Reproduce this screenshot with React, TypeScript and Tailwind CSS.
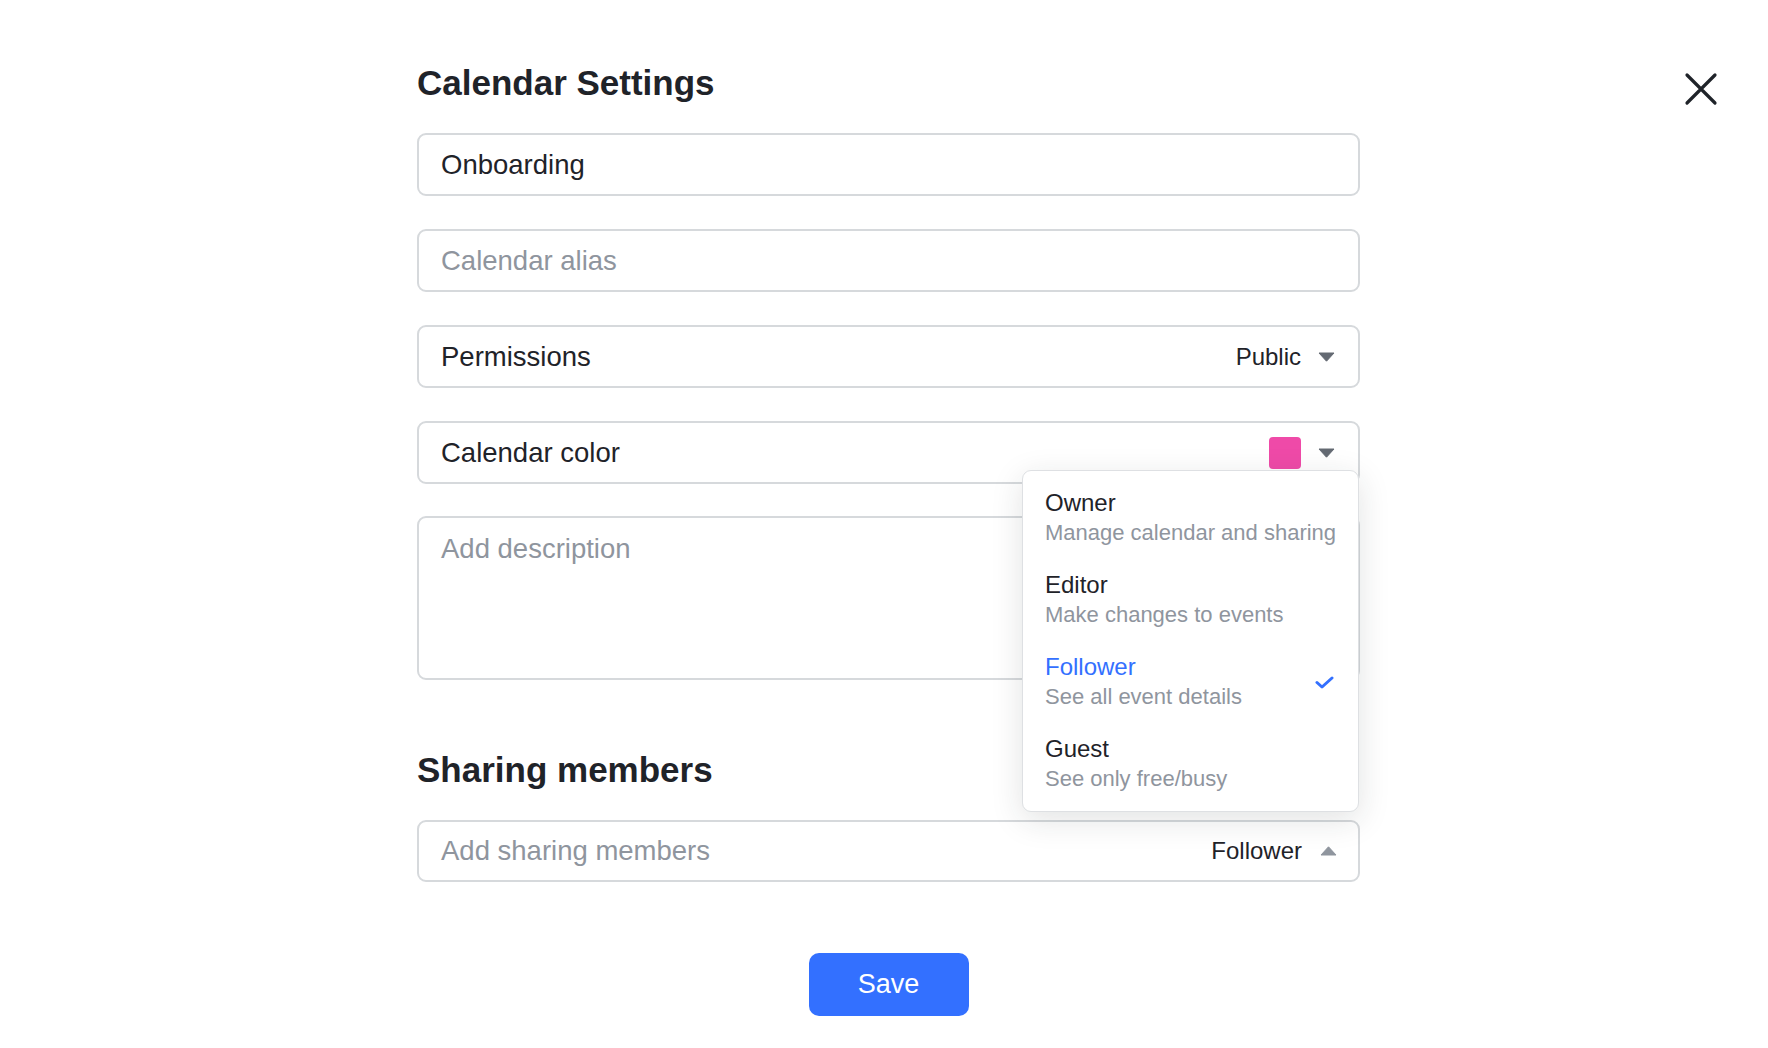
import React from "react";

function TriDown({ color = "#646a73" }: { color?: string }) {
  return (
    <svg width="17" height="10" viewBox="0 0 17 10" className="shrink-0">
      <path d="M1 1 H16 L8.5 9.2 Z" fill={color} stroke={color} strokeWidth="1" strokeLinejoin="round" />
    </svg>
  );
}

function TriUp({ color = "#8f959e" }: { color?: string }) {
  return (
    <svg width="17" height="10" viewBox="0 0 17 10" className="shrink-0">
      <path d="M1 9 H16 L8.5 0.8 Z" fill={color} stroke={color} strokeWidth="1" strokeLinejoin="round" />
    </svg>
  );
}

const items = [
  { t: "Owner", s: "Manage calendar and sharing", active: false },
  { t: "Editor", s: "Make changes to events", active: false },
  { t: "Follower", s: "See all event details", active: true },
  { t: "Guest", s: "See only free/busy", active: false },
];

export default function App() {
  return (
    <div className="relative min-h-[1048px] w-full bg-white text-[#1f2329] [font-family:'Liberation_Sans',Arial,sans-serif]">
      <button className="absolute left-[1683px] top-[71px] flex h-[36px] w-[36px] items-center justify-center">
        <svg width="36" height="36" viewBox="0 0 36 36">
          <path d="M4 4 L32 32 M32 4 L4 32" stroke="#1f2329" strokeWidth="3.2" strokeLinecap="round" />
        </svg>
      </button>

      <div className="ml-[417px] flex w-[943px] flex-col pt-[63px]">
        <h1 className="text-[35px] font-bold leading-[40px]">Calendar Settings</h1>

        <div className="mt-[30px] flex h-[63px] items-center rounded-[9px] border-2 border-[#d6d9dc] px-[22px] text-[27.5px]">
          Onboarding
        </div>

        <div className="mt-[33px] flex h-[63px] items-center rounded-[9px] border-2 border-[#d6d9dc] px-[22px] text-[27.5px] text-[#8f959e]">
          Calendar alias
        </div>

        <div className="mt-[33px] flex h-[63px] items-center justify-between rounded-[9px] border-2 border-[#d6d9dc] pl-[22px] pr-[23px] pt-[1px] text-[27.5px]">
          <span>Permissions</span>
          <div className="flex items-center gap-[17px]">
            <span className="text-[24px]">Public</span>
            <TriDown />
          </div>
        </div>

        <div className="relative mt-[33px] flex h-[63px] items-center justify-between rounded-[9px] border-2 border-[#d6d9dc] pl-[22px] pr-[23px] text-[27.5px]">
          <span>Calendar color</span>
          <div className="flex items-center gap-[17px]">
            <div className="h-[32px] w-[32px] rounded-[4px] bg-[#ef4aa8]" />
            <TriDown />
          </div>

          <div className="absolute right-[-1px] top-[47px] z-10 w-[337px] rounded-[9px] border border-[#dee0e3] bg-white py-[6px] shadow-[0_8px_32px_rgba(31,35,41,0.13)]">
            {items.map((it) => (
              <div key={it.t} className="flex h-[82px] items-center justify-between pl-[22px] pr-[24px]">
                <div className="flex min-w-0 flex-col whitespace-nowrap">
                  <span className={`text-[24px] leading-[30px] ${it.active ? "text-[#3370ff]" : "text-[#1f2329]"}`}>{it.t}</span>
                  <span className="text-[22px] leading-[30px] text-[#8f959e]">{it.s}</span>
                </div>
                {it.active && (
                  <svg width="19" height="13" viewBox="0 0 19 13" className="shrink-0">
                    <path d="M2 6.5 L7 11 L17 2" fill="none" stroke="#3370ff" strokeWidth="3" strokeLinecap="round" strokeLinejoin="round" />
                  </svg>
                )}
              </div>
            ))}
          </div>
        </div>

        <div className="mt-[32px] h-[164px] rounded-[9px] border-2 border-[#d6d9dc] px-[22px] pt-[11px] text-[27.5px] leading-[40px] text-[#8f959e]">
          Add description
        </div>

        <h2 className="mt-[70px] text-[35px] font-bold leading-[40px]">Sharing members</h2>

        <div className="mt-[30px] flex h-[62px] items-center justify-between rounded-[9px] border-2 border-[#d6d9dc] pl-[22px] pr-[21px] text-[27.5px]">
          <span className="text-[#8f959e]">Add sharing members</span>
          <div className="flex items-center gap-[18px]">
            <span className="text-[24px]">Follower</span>
            <TriUp />
          </div>
        </div>

        <div className="mt-[71px] flex justify-center">
          <button className="flex h-[63px] w-[160px] items-center justify-center rounded-[10px] bg-[#3370ff] text-[27px] text-white">
            Save
          </button>
        </div>
      </div>
    </div>
  );
}
